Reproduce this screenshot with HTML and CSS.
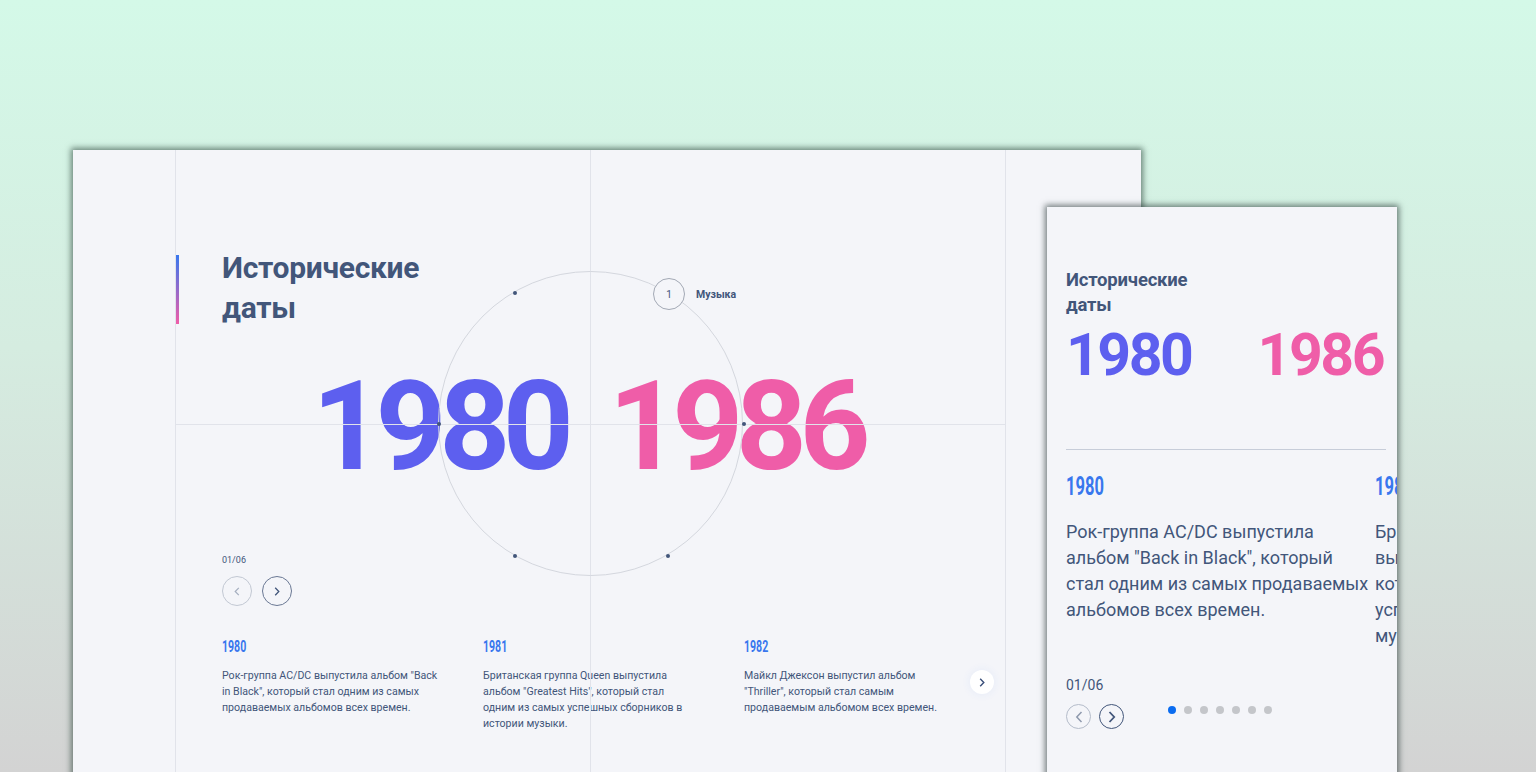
FILE: index.html
```html
<!DOCTYPE html>
<html lang="ru">
<head>
<meta charset="utf-8">
<title>Исторические даты</title>
<link rel="stylesheet" href="styles.css">
</head>
<body>
<div class="desk">
  <section class="win-main">
    <div class="frame">
      <div class="vline"></div>
      <div class="hline"></div>
      <div class="ring">
        <span class="dot d1"></span>
        <span class="dot d2"></span>
        <span class="dot d3"></span>
        <span class="dot d4"></span>
        <span class="dot d5"></span>
        <div class="bubble"><span class="bubble-num">1</span><span class="bubble-label">Музыка</span></div>
      </div>

      <div class="title-block">
        <span class="title-bar"></span>
        <h1 class="title">Исторические<br>даты</h1>
      </div>

      <div class="years">
        <span class="year-from">1980</span>
        <span class="year-to">1986</span>
      </div>

      <div class="nav">
        <div class="counter">01/06</div>
        <div class="nav-buttons">
          <button class="circ-btn prev" aria-label="prev"><svg width="6" height="9" viewBox="0 0 6 9"><path d="M4.8 0.8 L1.2 4.5 L4.8 8.2" fill="none" stroke="currentColor" stroke-width="1.2"/></svg></button>
          <button class="circ-btn next" aria-label="next"><svg width="6" height="9" viewBox="0 0 6 9"><path d="M1.2 0.8 L4.8 4.5 L1.2 8.2" fill="none" stroke="currentColor" stroke-width="1.3"/></svg></button>
        </div>
      </div>

      <div class="slides">
        <article class="slide">
          <div class="slide-year"><span>1980</span></div>
          <p class="slide-text">Рок-группа AC/DC выпустила альбом "Back<br>in Black", который стал одним из самых<br>продаваемых альбомов всех времен.</p>
        </article>
        <article class="slide">
          <div class="slide-year"><span>1981</span></div>
          <p class="slide-text">Британская группа Queen выпустила<br>альбом "Greatest Hits", который стал<br>одним из самых успешных сборников в<br>истории музыки.</p>
        </article>
        <article class="slide">
          <div class="slide-year"><span>1982</span></div>
          <p class="slide-text">Майкл Джексон выпустил альбом<br>"Thriller", который стал самым<br>продаваемым альбомом всех времен.</p>
        </article>
      </div>
      <button class="slides-next" aria-label="next"><svg width="6" height="9" viewBox="0 0 6 9"><path d="M1.2 0.8 L4.8 4.5 L1.2 8.2" fill="none" stroke="currentColor" stroke-width="1.4"/></svg></button>
    </div>
  </section>

  <section class="win-mobile">
    <div class="m-inner">
      <h2 class="m-title">Исторические<br>даты</h2>
      <div class="m-years">
        <span class="year-from">1980</span>
        <span class="year-to">1986</span>
      </div>
      <div class="m-slider">
        <article class="m-slide">
          <div class="m-slide-year"><span>1980</span></div>
          <p class="m-slide-text">Рок-группа AC/DC выпустила альбом "Back in Black", который стал одним из самых продаваемых альбомов всех времен.</p>
        </article>
        <article class="m-slide">
          <div class="m-slide-year"><span>1981</span></div>
          <p class="m-slide-text">Британская группа Queen выпустила альбом "Greatest Hits", который стал одним из самых успешных сборников в истории музыки.</p>
        </article>
      </div>
      <div class="m-nav">
        <div class="m-counter">01/06</div>
        <div class="m-buttons">
          <button class="m-btn prev" aria-label="prev"><svg width="8" height="12" viewBox="0 0 8 12"><path d="M6.5 1 L1.8 6 L6.5 11" fill="none" stroke="currentColor" stroke-width="1.5"/></svg></button>
          <button class="m-btn next" aria-label="next"><svg width="8" height="12" viewBox="0 0 8 12"><path d="M1.5 1 L6.2 6 L1.5 11" fill="none" stroke="currentColor" stroke-width="1.8"/></svg></button>
        </div>
      </div>
    </div>
    <div class="m-dots">
      <span class="m-dot active"></span>
      <span class="m-dot"></span>
      <span class="m-dot"></span>
      <span class="m-dot"></span>
      <span class="m-dot"></span>
      <span class="m-dot"></span>
      <span class="m-dot"></span>
    </div>
  </section>
</div>
</body>
</html>
```

FILE: styles.css
```css
* { box-sizing: border-box; }

html, body {
  margin: 0;
  padding: 0;
}

body {
  width: 1536px;
  height: 772px;
  overflow: hidden;
  font-family: Roboto, "Noto Sans", sans-serif;
  color: #42567a;
  background: linear-gradient(180deg, #d4f9e8 0%, #d5ece0 45%, #d3d3d3 100%);
}

.desk {
  position: relative;
  width: 1536px;
  height: 772px;
  overflow: hidden;
}

/* ---------- Main desktop window ---------- */
.win-main {
  position: absolute;
  left: 73px;
  top: 150px;
  width: 1068px;
  height: 700px;
  background: #f4f5f9;
  box-shadow: 0 0 6px 2px rgba(30, 55, 45, 0.6);
}

.frame {
  position: relative;
  margin-left: 102px;
  width: 831px;
  height: 100%;
  border-left: 1px solid #e1e3ea;
  border-right: 1px solid #e1e3ea;
  padding: 98px 0 0 46px;
}

.vline {
  position: absolute;
  left: 414px;
  top: 0;
  bottom: 0;
  width: 1px;
  background: #e1e3ea;
}

.hline {
  position: absolute;
  left: 0;
  right: 0;
  top: 274px;
  height: 1px;
  background: #e1e3ea;
}

.ring {
  position: absolute;
  left: 262px;
  top: 121px;
  width: 305px;
  height: 305px;
  border: 1px solid #d4d7de;
  border-radius: 50%;
}

.dot {
  position: absolute;
  width: 4px;
  height: 4px;
  margin: -2px 0 0 -2px;
  border-radius: 50%;
  background: #42567a;
}
.d1 { left: 76px; top: 21px; }
.d2 { left: 0px; top: 152px; }
.d3 { left: 76px; top: 284px; }
.d4 { left: 229px; top: 284px; }
.d5 { left: 305px; top: 152px; }

.bubble {
  position: absolute;
  left: 214px;
  top: 6px;
  display: flex;
  align-items: center;
  gap: 11px;
}

.bubble-num {
  width: 32px;
  height: 32px;
  border-radius: 50%;
  border: 1px solid #a3a9b5;
  background: #f4f5f9;
  display: flex;
  align-items: center;
  justify-content: center;
  font-size: 10px;
  color: #42567a;
}

.bubble-label {
  font-size: 10.5px;
  font-weight: 700;
  color: #42567a;
}

.title-block {
  position: relative;
}

.title-bar {
  position: absolute;
  left: -46px;
  top: 7px;
  width: 3px;
  height: 69px;
  background: linear-gradient(180deg, #3877ee 0%, #ef5da8 100%);
}

.title {
  margin: 0;
  font-size: 30px;
  line-height: 40px;
  font-weight: 700;
  letter-spacing: -0.3px;
  color: #42567a;
}

.years {
  margin: 37px 0 0 -46px;
  width: 829px;
  padding-right: 6px;
  display: flex;
  justify-content: center;
  gap: 42px;
  font-size: 124px;
  line-height: 124px;
  font-weight: 700;
  letter-spacing: -7.5px;
}

.year-from { color: #5d5fef; }
.year-to { color: #ef5da8; }

.nav {
  margin-top: 65px;
}

.counter {
  font-size: 9px;
  line-height: 12px;
  color: #42567a;
}

.nav-buttons {
  margin-top: 10px;
  display: flex;
  gap: 10px;
}

.circ-btn {
  width: 30px;
  height: 30px;
  padding: 0;
  border-radius: 50%;
  background: transparent;
  display: flex;
  align-items: center;
  justify-content: center;
}

.circ-btn.prev {
  border: 1px solid #c2c8d3;
  color: #a5aebf;
}

.circ-btn.next {
  border: 1px solid #6a7894;
  color: #42567a;
}

.slides {
  margin-top: 33px;
  display: flex;
  gap: 43px;
}

.slide {
  width: 218px;
  flex: none;
}

.slide-year {
  height: 16px;
  font-size: 16px;
  line-height: 16px;
  font-weight: 700;
  color: #3877ee;
}

.slide-year span {
  display: inline-block;
  transform: scaleX(0.66);
  transform-origin: left center;
}

.slide-text {
  margin: 13px 0 0;
  font-size: 10.6px;
  line-height: 16px;
  white-space: nowrap;
  color: #42567a;
}

.slides-next {
  position: absolute;
  right: 11px;
  top: 520px;
  width: 24px;
  height: 24px;
  padding: 0;
  border: none;
  border-radius: 50%;
  background: #ffffff;
  color: #3a4f7a;
  box-shadow: 0 0 10px rgba(56, 119, 238, 0.08);
  display: flex;
  align-items: center;
  justify-content: center;
}

/* ---------- Mobile window ---------- */
.win-mobile {
  position: absolute;
  left: 1047px;
  top: 207px;
  width: 350px;
  height: 640px;
  background: #f4f5f9;
  box-shadow: 0 0 6px 2px rgba(30, 45, 45, 0.6);
  overflow: hidden;
}

.m-inner {
  padding: 61px 0 0 19px;
}

.m-title {
  margin: 0;
  font-size: 18.5px;
  line-height: 25px;
  font-weight: 700;
  letter-spacing: -0.2px;
  color: #42567a;
}

.m-years {
  margin-top: 7px;
  width: 317px;
  display: flex;
  justify-content: space-between;
  font-size: 59px;
  line-height: 59px;
  font-weight: 700;
  letter-spacing: -2.5px;
}

.m-slider {
  margin-top: 65px;
  width: 320px;
  height: 227px;
  border-top: 1px solid #c7cdd9;
  padding-top: 24px;
  display: flex;
}

.m-slide {
  width: 309px;
  flex: none;
}

.m-slide-year {
  height: 25px;
  font-size: 25px;
  line-height: 25px;
  font-weight: 700;
  color: #3877ee;
}

.m-slide-year span {
  display: inline-block;
  transform: scaleX(0.66);
  transform-origin: left center;
}

.m-slide-text {
  width: 305px;
  margin: 20px 0 0;
  font-size: 18px;
  line-height: 26px;
  color: #42567a;
}

.m-counter {
  font-size: 14px;
  line-height: 18px;
  color: #42567a;
}

.m-buttons {
  margin-top: 10px;
  display: flex;
  gap: 8px;
}

.m-btn {
  width: 25px;
  height: 25px;
  padding: 0;
  border-radius: 50%;
  background: transparent;
  display: flex;
  align-items: center;
  justify-content: center;
}

.m-btn.prev {
  border: 1px solid #b4bcca;
  color: #8e99ad;
}

.m-btn.next {
  border: 1px solid #42567a;
  color: #42567a;
}

.m-dots {
  position: absolute;
  left: 121px;
  top: 499px;
  display: flex;
  gap: 8px;
}

.m-dot {
  width: 8px;
  height: 8px;
  border-radius: 50%;
  background: #c4c6ca;
}

.m-dot.active {
  background: #0a6cf0;
}
```
